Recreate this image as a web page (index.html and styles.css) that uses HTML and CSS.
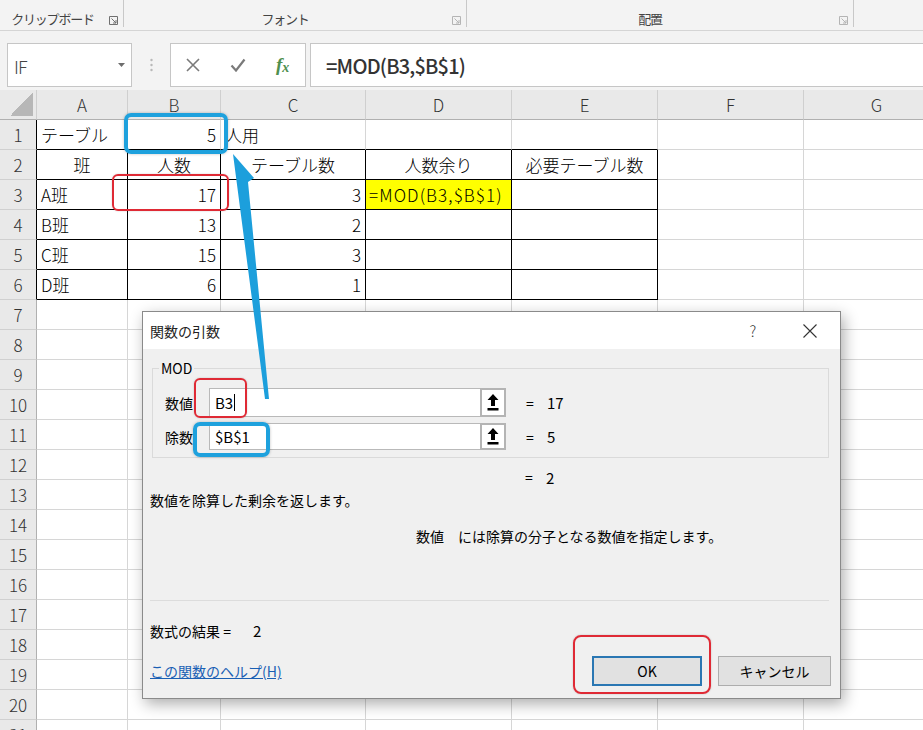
FILE: index.html
```html
<!DOCTYPE html>
<html lang="ja">
<head>
<meta charset="utf-8">
<title>関数の引数</title>
<link rel="stylesheet" href="styles.css">
</head>
<body>
<div class="app">
  <div class="ribbon">
    <div class="grp g1"><span class="glabel">クリップボード</span><span class="launch"><svg width="9" height="9" viewBox="0 0 9 9"><path d="M0.5 8.5V0.5H8.5V8.5Z" fill="none" stroke="#707070"/><path d="M2.5 2.5L7 7M4 7H7V4" fill="none" stroke="#707070"/></svg></span></div>
    <div class="grp g2"><span class="glabel">フォント</span><span class="launch"><svg width="9" height="9" viewBox="0 0 9 9"><path d="M0.5 8.5V0.5H8.5V8.5Z" fill="none" stroke="#b4b4b4"/><path d="M2.5 2.5L7 7M4 7H7V4" fill="none" stroke="#b4b4b4"/></svg></span></div>
    <div class="grp g3"><span class="glabel">配置</span><span class="launch"><svg width="9" height="9" viewBox="0 0 9 9"><path d="M0.5 8.5V0.5H8.5V8.5Z" fill="none" stroke="#b4b4b4"/><path d="M2.5 2.5L7 7M4 7H7V4" fill="none" stroke="#b4b4b4"/></svg></span></div>
    <div class="grp g4"></div>
  </div>

  <div class="fbar">
    <div class="namebox"><span class="nbtext">IF</span><svg class="nbcaret" width="7" height="4" viewBox="0 0 7 4"><path d="M0 0H7L3.5 4Z" fill="#6d6d6d"/></svg></div>
    <div class="dots"><svg width="3" height="14" viewBox="0 0 3 14"><circle cx="1.5" cy="2" r="1.2" fill="#b8b8b8"/><circle cx="1.5" cy="7" r="1.2" fill="#b8b8b8"/><circle cx="1.5" cy="12" r="1.2" fill="#b8b8b8"/></svg></div>
    <div class="fbtns">
      <span class="fb"><svg width="14" height="14" viewBox="0 0 14 14"><path d="M1 1L13 13M13 1L1 13" stroke="#7a7a7a" stroke-width="1.6"/></svg></span>
      <span class="fb"><svg width="16" height="14" viewBox="0 0 16 14"><path d="M1.5 7.5L6 12.5L14.5 1.5" fill="none" stroke="#7a7a7a" stroke-width="2.2"/></svg></span>
      <span class="fb fx">f<span class="fxx">x</span></span>
    </div>
    <div class="finput">=MOD(B3,$B$1)</div>
  </div>

  <div class="sheet">
    <div class="c hdr corner"><span class="tri"></span></div>
    <div class="c hdr">A</div><div class="c hdr">B</div><div class="c hdr">C</div><div class="c hdr">D</div><div class="c hdr">E</div><div class="c hdr">F</div><div class="c hdr">G</div>

    <div class="c rh bkr">1</div>
    <div class="c bkb">テーブル</div><div class="c r bkb">5</div><div class="c bkb">人用</div><div class="c bkb"></div><div class="c bkb"></div><div class="c"></div><div class="c"></div>

    <div class="c rh bkr">2</div>
    <div class="c ctr bkb bkr">班</div><div class="c ctr bkb bkr">人数</div><div class="c ctr bkb bkr">テーブル数</div><div class="c ctr bkb bkr">人数余り</div><div class="c ctr bkb bkr">必要テーブル数</div><div class="c"></div><div class="c"></div>

    <div class="c rh bkr">3</div>
    <div class="c bkb bkr">A班</div><div class="c r bkb bkr">17</div><div class="c r bkb bkr">3</div><div class="c bkb bkr yel">=MOD(B3,$B$1)</div><div class="c bkb bkr"></div><div class="c"></div><div class="c"></div>

    <div class="c rh bkr">4</div>
    <div class="c bkb bkr">B班</div><div class="c r bkb bkr">13</div><div class="c r bkb bkr">2</div><div class="c bkb bkr"></div><div class="c bkb bkr"></div><div class="c"></div><div class="c"></div>

    <div class="c rh bkr">5</div>
    <div class="c bkb bkr">C班</div><div class="c r bkb bkr">15</div><div class="c r bkb bkr">3</div><div class="c bkb bkr"></div><div class="c bkb bkr"></div><div class="c"></div><div class="c"></div>

    <div class="c rh bkr">6</div>
    <div class="c bkb bkr">D班</div><div class="c r bkb bkr">6</div><div class="c r bkb bkr">1</div><div class="c bkb bkr"></div><div class="c bkb bkr"></div><div class="c"></div><div class="c"></div>

    <div class="c rh">7</div><div class="c"></div><div class="c"></div><div class="c"></div><div class="c"></div><div class="c"></div><div class="c"></div><div class="c"></div>
    <div class="c rh">8</div><div class="c"></div><div class="c"></div><div class="c"></div><div class="c"></div><div class="c"></div><div class="c"></div><div class="c"></div>
    <div class="c rh">9</div><div class="c"></div><div class="c"></div><div class="c"></div><div class="c"></div><div class="c"></div><div class="c"></div><div class="c"></div>
    <div class="c rh">10</div><div class="c"></div><div class="c"></div><div class="c"></div><div class="c"></div><div class="c"></div><div class="c"></div><div class="c"></div>
    <div class="c rh">11</div><div class="c"></div><div class="c"></div><div class="c"></div><div class="c"></div><div class="c"></div><div class="c"></div><div class="c"></div>
    <div class="c rh">12</div><div class="c"></div><div class="c"></div><div class="c"></div><div class="c"></div><div class="c"></div><div class="c"></div><div class="c"></div>
    <div class="c rh">13</div><div class="c"></div><div class="c"></div><div class="c"></div><div class="c"></div><div class="c"></div><div class="c"></div><div class="c"></div>
    <div class="c rh">14</div><div class="c"></div><div class="c"></div><div class="c"></div><div class="c"></div><div class="c"></div><div class="c"></div><div class="c"></div>
    <div class="c rh">15</div><div class="c"></div><div class="c"></div><div class="c"></div><div class="c"></div><div class="c"></div><div class="c"></div><div class="c"></div>
    <div class="c rh">16</div><div class="c"></div><div class="c"></div><div class="c"></div><div class="c"></div><div class="c"></div><div class="c"></div><div class="c"></div>
    <div class="c rh">17</div><div class="c"></div><div class="c"></div><div class="c"></div><div class="c"></div><div class="c"></div><div class="c"></div><div class="c"></div>
    <div class="c rh">18</div><div class="c"></div><div class="c"></div><div class="c"></div><div class="c"></div><div class="c"></div><div class="c"></div><div class="c"></div>
    <div class="c rh">19</div><div class="c"></div><div class="c"></div><div class="c"></div><div class="c"></div><div class="c"></div><div class="c"></div><div class="c"></div>
    <div class="c rh">20</div><div class="c"></div><div class="c"></div><div class="c"></div><div class="c"></div><div class="c"></div><div class="c"></div><div class="c"></div>
    <div class="c rh">21</div><div class="c"></div><div class="c"></div><div class="c"></div><div class="c"></div><div class="c"></div><div class="c"></div><div class="c"></div>
  </div>

  <div class="dialog">
    <div class="dtitle">
      <span class="dtext">関数の引数</span>
      <span class="dq">?</span>
      <span class="dclose"><svg width="14" height="14" viewBox="0 0 14 14"><path d="M0.5 0.5L13.5 13.5M13.5 0.5L0.5 13.5" stroke="#333" stroke-width="1.1"/></svg></span>
    </div>
    <div class="dbody">
      <div class="gbox">
        <span class="legend">MOD</span>
        <div class="arg">
          <span class="alabel">数値</span>
          <span class="ainput">B3<span class="cursor"></span></span>
          <span class="abtn"><svg width="12" height="17" viewBox="0 0 12 17"><path d="M6 0L11.5 6H8V12H4V6H0.5Z" fill="#000"/><rect x="0.5" y="14" width="11" height="2.5" fill="#000"/></svg></span>
          <span class="aeq">=</span><span class="aval">17</span>
        </div>
        <div class="arg arg2">
          <span class="alabel">除数</span>
          <span class="ainput">$B$1</span>
          <span class="abtn"><svg width="12" height="17" viewBox="0 0 12 17"><path d="M6 0L11.5 6H8V12H4V6H0.5Z" fill="#000"/><rect x="0.5" y="14" width="11" height="2.5" fill="#000"/></svg></span>
          <span class="aeq">=</span><span class="aval">5</span>
        </div>
      </div>
      <div class="total"><span class="aeq">=</span><span class="aval">2</span></div>
      <div class="desc">数値を除算した剰余を返します。</div>
      <div class="argdesc">数値　には除算の分子となる数値を指定します。</div>
      <div class="sep"></div>
      <div class="result"><span>数式の結果 =</span><span class="resval">2</span></div>
      <div class="footer">
        <span class="help">この関数のヘルプ(H)</span>
        <span class="btn ok">OK</span>
        <span class="btn cancel">キャンセル</span>
      </div>
    </div>
  </div>

  <div class="mark blue mk-b1"></div>
  <div class="mark red mk-b3"></div>
  <div class="mark red mk-num"></div>
  <div class="mark blue mk-div"></div>
  <div class="mark red mk-ok"></div>
  <svg class="arrow" width="923" height="730" viewBox="0 0 923 730"><polygon points="233,154 254,178 248,182 269,399 265,399" fill="#1c9fdc"/></svg>
</div>
</body>
</html>
```

FILE: styles.css
```css
html, body {
  margin: 0;
  padding: 0;
}
body {
  font-family: "Noto Sans CJK JP", "Noto Sans", sans-serif;
  color: #000;
}
.app {
  position: relative;
  width: 923px;
  height: 730px;
  overflow: hidden;
  background: #fff;
}

/* ribbon */
.ribbon {
  display: flex;
  height: 31px;
  box-sizing: border-box;
  background: #f3f3f3;
  border-bottom: 1px solid #d5d5d5;
}
.grp {
  display: flex;
  align-items: center;
  height: 27px;
  padding-top: 11px;
  box-sizing: border-box;
  border-right: 1px solid #c8c8c8;
}
.g1 { width: 124px; }
.g2 { width: 343px; }
.g3 { width: 387px; }
.g4 { flex: 1; border-right: none; }
.glabel {
  flex: 1;
  text-align: center;
  font-size: 13px;
  line-height: 16px;
  letter-spacing: -1.2px;
  color: #444;
}
.g1 .glabel { padding-left: 2px; }
.launch {
  width: 20px;
  display: flex;
  justify-content: center;
  align-items: center;
  padding-top: 2px;
}

/* formula bar */
.fbar {
  display: flex;
  height: 59px;
  box-sizing: border-box;
  padding: 12px 0 3px 7px;
  background: #f3f3f3;
}
.namebox {
  width: 125px;
  box-sizing: border-box;
  background: #fff;
  border: 1px solid #c6c6c6;
  display: flex;
  align-items: center;
  padding-left: 6px;
  padding-right: 6px;
}
.nbtext {
  flex: 1;
  font-size: 18px;
  font-weight: 300;
  color: #444;
  letter-spacing: -1px;
  padding-top: 2px;
}
.dots {
  width: 38px;
  display: flex;
  justify-content: center;
  align-items: center;
}
.fbtns {
  width: 136px;
  box-sizing: border-box;
  background: #fff;
  border: 1px solid #c6c6c6;
  display: flex;
  margin-right: 4px;
}
.fb {
  width: 45px;
  display: flex;
  justify-content: center;
  align-items: center;
}
.fx {
  font-family: "Liberation Serif", serif;
  font-style: italic;
  font-size: 19px;
  color: #4f8f4f;
  font-weight: bold;
}
.fxx {
  font-size: 14px;
  margin-top: 5px;
}
.finput {
  flex: 1;
  background: #fff;
  border: 1px solid #c6c6c6;
  border-right: none;
  padding-left: 15px;
  display: flex;
  align-items: center;
  font-size: 20px;
  font-weight: 500;
  color: #333;
  letter-spacing: -0.8px;
}

/* sheet */
.sheet {
  display: grid;
  grid-template-columns: 37px 91px 93px 145px 146px 146px 146px 146px;
  grid-auto-rows: 30px;
  width: max-content;
}
.c {
  box-sizing: border-box;
  border-right: 1px solid #d6d6d6;
  border-bottom: 1px solid #d6d6d6;
  font-size: 17px;
  font-weight: 300;
  line-height: 29px;
  padding: 0 4px;
  white-space: nowrap;
  overflow: hidden;
}
.hdr {
  background: #e9e9e9;
  color: #333;
  text-align: center;
  border-right: 1px solid #cfcfcf;
  border-bottom: 1px solid #b0b0b0;
}
.corner {
  display: flex;
  justify-content: flex-end;
  align-items: flex-end;
  padding: 0 3px 3px 0;
}
.tri {
  width: 23px;
  height: 23px;
  background: linear-gradient(to bottom right, transparent 50%, #b7b7b7 50%);
}
.rh {
  background: #e9e9e9;
  color: #333;
  text-align: center;
  padding: 0;
  border-right: 1px solid #b0b0b0;
  border-bottom: 1px solid #d0d0d0;
}
.r { text-align: right; }
.ctr { text-align: center; }
.bkb { border-bottom-color: #000; }
.bkr { border-right-color: #000; }
.yel {
  background: #ffff00;
  padding-left: 3px;
  letter-spacing: 1.1px;
}

/* dialog */
.dialog {
  position: absolute;
  left: 142px;
  top: 311px;
  width: 699px;
  height: 388px;
  box-sizing: border-box;
  border: 1px solid #8a8a8a;
  background: #f0f0f0;
  box-shadow: 3px 5px 14px rgba(0, 0, 0, 0.32);
  font-size: 14px;
  color: #000;
}
.dtitle {
  height: 37px;
  background: #fff;
  display: flex;
  align-items: center;
  padding-left: 7px;
  padding-right: 20px;
}
.dtext {
  flex: 1;
  font-size: 14px;
  color: #222;
}
.dq {
  width: 20px;
  text-align: center;
  font-size: 15px;
  font-weight: 300;
  color: #333;
  margin-right: 37px;
}
.dclose {
  width: 20px;
  display: flex;
  justify-content: center;
}
.dbody {
  padding: 19px 11px 0 7px;
}
.gbox {
  position: relative;
  margin-left: 2px;
  height: 90px;
  box-sizing: border-box;
  border: 1px solid #dadada;
  padding: 19px 0 0 12px;
}
.legend {
  position: absolute;
  left: 6px;
  top: -11px;
  padding: 0 2px;
  background: #f0f0f0;
  font-size: 14px;
  line-height: 20px;
}
.arg {
  display: flex;
  align-items: center;
  height: 29px;
}
.arg2 {
  margin-top: 6px;
  height: 27px;
}
.alabel {
  width: 44px;
}
.ainput {
  width: 271px;
  height: 100%;
  box-sizing: border-box;
  background: #fff;
  border: 1px solid #b9b9b9;
  border-right: none;
  display: flex;
  align-items: center;
  padding-left: 5px;
  font-size: 15px;
}
.cursor {
  display: inline-block;
  width: 1px;
  height: 17px;
  background: #000;
  margin-left: 1px;
}
.abtn {
  width: 26px;
  height: 100%;
  box-sizing: border-box;
  border: 2px solid #b4b4b4;
  background: #fff;
  display: flex;
  justify-content: center;
  align-items: center;
}
.aeq {
  margin-left: 20px;
  width: 12px;
}
.aval {
  margin-left: 9px;
  font-size: 15px;
}
.total {
  display: flex;
  align-items: center;
  height: 20px;
  margin-top: 9px;
  padding-left: 355px;
}
.desc {
  height: 20px;
  line-height: 20px;
  margin-top: 3px;
}
.argdesc {
  height: 20px;
  line-height: 20px;
  margin-top: 16px;
  padding-left: 266px;
}
.sep {
  margin-top: 54px;
  height: 1px;
  background: #dcdcdc;
}
.result {
  margin-top: 20px;
  height: 20px;
  line-height: 20px;
  display: flex;
}
.resval {
  margin-left: 22px;
  font-size: 15px;
}
.footer {
  margin-top: 15px;
  display: flex;
  align-items: center;
  height: 30px;
  margin-right: -2px;
}
.help {
  flex: 1;
  color: #1a5fb4;
  text-decoration: underline;
}
.btn {
  height: 30px;
  box-sizing: border-box;
  background: #e1e1e1;
  display: flex;
  justify-content: center;
  align-items: center;
  font-size: 14px;
}
.ok {
  width: 110px;
  border: 2px solid #2a77b3;
  margin-right: 16px;
}
.cancel {
  width: 113px;
  border: 1px solid #adadad;
}

/* annotation overlays */
.mark {
  position: absolute;
  box-sizing: border-box;
}
.blue {
  border: 4px solid #1ea1dd;
  border-radius: 7px;
  box-shadow: 0 0 3px rgba(0, 0, 0, 0.25);
}
.red {
  border: 2px solid #df2a35;
  border-radius: 6px;
  box-shadow: 0 0 2px rgba(0, 0, 0, 0.2);
}
.mk-b1 { left: 124px; top: 113px; width: 104px; height: 41px; }
.mk-b3 { left: 112px; top: 174px; width: 117px; height: 37px; }
.mk-num { left: 194px; top: 378px; width: 53px; height: 40px; }
.mk-div { left: 193px; top: 422px; width: 77px; height: 35px; }
.mk-ok { left: 573px; top: 635px; width: 138px; height: 59px; border-radius: 8px; }
.arrow {
  position: absolute;
  left: 0;
  top: 0;
  pointer-events: none;
}
```
